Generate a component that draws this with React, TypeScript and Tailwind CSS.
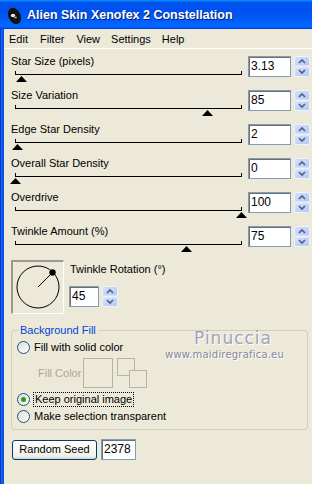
import React from "react";

const sliders = [
  { label: "Star Size (pixels)", value: "3.13", pos: 0.027 },
  { label: "Size Variation", value: "85", pos: 0.85 },
  { label: "Edge Star Density", value: "2", pos: 0.01 },
  { label: "Overall Star Density", value: "0", pos: 0 },
  { label: "Overdrive", value: "100", pos: 1 },
  { label: "Twinkle Amount (%)", value: "75", pos: 0.755 },
];

const FONT = "font-['Liberation_Sans',Arial,sans-serif]";

function Spinner() {
  return (
    <svg width="16" height="21" viewBox="0 0 16 21" className="shrink-0">
      <defs>
        <linearGradient id="spin" x1="0" y1="0" x2="1" y2="1">
          <stop offset="0" stopColor="#d6e2fb" />
          <stop offset="1" stopColor="#b2c7f3" />
        </linearGradient>
      </defs>
      <rect x="0.5" y="0.5" width="15" height="9.5" rx="1.5" fill="url(#spin)" stroke="#eef3fe" />
      <rect x="0.5" y="11" width="15" height="9.5" rx="1.5" fill="url(#spin)" stroke="#eef3fe" />
      <path d="M5 7 L8 4 L11 7" fill="none" stroke="#4d6185" strokeWidth="1.6" />
      <path d="M5 14 L8 17 L11 14" fill="none" stroke="#4d6185" strokeWidth="1.6" />
    </svg>
  );
}

function TextBox({ value, w }: { value: string; w: string }) {
  return (
    <div
      className={`${w} h-[21px] bg-white border border-[#7f9db9] shadow-[inset_1px_1px_0_#6f6f6f] pl-[2px] text-[12px] leading-[19px] text-black shrink-0`}
    >
      {value}
    </div>
  );
}

function Thumb({ pos }: { pos: number }) {
  return (
    <svg
      width="11"
      height="6"
      viewBox="0 0 11 6"
      className="absolute top-[8px]"
      style={{ left: 4 + pos * 226 - 5 }}
    >
      <polygon points="5.5,0 11,6 0,6" fill="#000" />
    </svg>
  );
}

function SliderRow({ label, value, pos }: { label: string; value: string; pos: number }) {
  return (
    <div className="flex h-[34px]">
      <div className="w-[237px] flex flex-col">
        <div className="h-[14px] leading-[14px] text-[11px] text-black">{label}</div>
        <div className="relative h-[20px]">
          <div className="ml-[4px] mt-[3px] w-[227px] h-[4px] border-x border-b border-black" />
          <Thumb pos={pos} />
        </div>
      </div>
      <div className="flex gap-[3px] pt-[2px]">
        <TextBox value={value} w="w-[43px]" />
        <Spinner />
      </div>
    </div>
  );
}

function Radio({ checked }: { checked?: boolean }) {
  return (
    <div className="w-[13px] h-[13px] rounded-full border border-[#1c5180] bg-[linear-gradient(135deg,#dcdcd7,#ffffff)] flex items-center justify-center shrink-0">
      {checked && <div className="w-[5px] h-[5px] rounded-full bg-[#21a121]" />}
    </div>
  );
}

export default function App() {
  return (
    <div className={`w-[312px] h-[484px] bg-[#ece9d8] flex flex-col overflow-hidden ${FONT}`}>
      {/* title bar */}
      <div className="h-[29px] shrink-0 flex items-center pl-[7px] pt-[2px] gap-[5px] bg-[linear-gradient(180deg,#0997ff,#0053ee_8%,#0050ee_40%,#0066ff_88%,#0066ff_93%,#005bff_95%,#003dd7_96%,#003dd7)]">
        <svg width="15" height="18" viewBox="0 0 15 18">
          <ellipse cx="7.5" cy="9" rx="6" ry="8.5" transform="rotate(-25 7.5 9)" fill="#111" />
          <ellipse cx="6" cy="8.5" rx="2.2" ry="1.7" fill="#e8e8e8" />
          <ellipse cx="8.5" cy="10.5" rx="1.4" ry="1" fill="#999" />
        </svg>
        <span className="text-white font-bold text-[12.5px] [text-shadow:1px_1px_0_#0a1e6e]">
          Alien Skin Xenofex 2 Constellation
        </span>
      </div>

      <div className="flex flex-1">
        <div className="w-[4px] shrink-0 bg-[linear-gradient(90deg,#0831d9_0_1px,#166aee_1px_2px,#0855dd_2px)]" />
        <div className="flex-1 flex flex-col">
          {/* menu */}
          <div className="h-[20px] pt-[2px] flex items-center text-[11px] text-black border-b border-white">
            <span className="pl-[5px] pr-[6px]">Edit</span>
            <span className="px-[6px]">Filter</span>
            <span className="px-[6px]">View</span>
            <span className="pl-[5px] pr-[6px]">Settings</span>
            <span className="pl-[5px] pr-[6px]">Help</span>
          </div>

          <div className="pl-[7px] pt-[5px] flex flex-col">
            {sliders.map((s) => (
              <SliderRow key={s.label} {...s} />
            ))}

            {/* rotation */}
            <div className="flex mt-[2px] gap-[5px]">
              <div className="w-[53px] h-[54px] border-t-2 border-l-2 border-[#9d9a8c] border-b border-r border-b-white border-r-white">
                <svg width="50" height="51" viewBox="0 0 50 51">
                  <circle cx="25" cy="25" r="21" fill="none" stroke="#000" strokeWidth="1" />
                  <line x1="25" y1="25" x2="39.8" y2="10.2" stroke="#000" strokeWidth="1" />
                  <circle cx="39.5" cy="10.5" r="3.2" fill="#000" />
                </svg>
              </div>
              <div className="flex flex-col pt-[2px]">
                <div className="h-[14px] leading-[14px] text-[11px] pl-[1px]">Twinkle Rotation (°)</div>
                <div className="flex gap-[3px] mt-[10px]">
                  <TextBox value="45" w="w-[30px]" />
                  <Spinner />
                </div>
              </div>
            </div>

            {/* background fill */}
            <div className="relative mt-[16px] w-[297px] h-[100px] border border-[#d0d0bf] rounded-[3px] pl-[5px] pt-[8px] text-[11px]">
              <div className="absolute -top-[8px] left-[6px] px-[2px] bg-[#ece9d8] text-[#0046d5] leading-[14px]">
                Background Fill
              </div>
              <div className="absolute left-[153px] top-[-3px] flex flex-col items-start font-['DejaVu_Sans',sans-serif] pointer-events-none">
                <span className="ml-[29px] text-[17px] leading-[20px] tracking-[1px] text-[#a2a2ba] [text-shadow:1px_1px_0_#ffffff]">
                  Pinuccia
                </span>
                <span className="mt-[1px] text-[10px] leading-[11px] tracking-[0.2px] text-[#8686a0] [text-shadow:1px_1px_0_#ffffff]">
                  www.maidiregrafica.eu
                </span>
              </div>

              <div className="flex items-center gap-[4px] h-[16px]">
                <Radio />
                <span>Fill with solid color</span>
              </div>
              <div className="flex items-center h-[30px] mt-[3px] pl-[21px]">
                <span className="text-[#aca899] w-[45px]">Fill Color</span>
                <div className="w-[30px] h-[30px] border border-[#b5b3a5]" />
                <div className="relative w-[30px] h-[30px] ml-[4px]">
                  <div className="absolute left-0 top-0 w-[18px] h-[18px] border border-[#b5b3a5]" />
                  <div className="absolute left-[12px] top-[12px] w-[18px] h-[18px] border border-[#b5b3a5] bg-[#ece9d8]" />
                </div>
              </div>
              <div className="flex items-center gap-[3px] h-[16px] mt-[3px]">
                <Radio checked />
                <span className="border border-dotted border-black px-[1px] leading-[13px]">Keep original image</span>
              </div>
              <div className="flex items-center gap-[4px] h-[16px] mt-[1px]">
                <Radio />
                <span>Make selection transparent</span>
              </div>
            </div>

            {/* random seed */}
            <div className="flex items-center gap-[4px] mt-[9px] pl-[1px]">
              <button className="w-[85px] h-[20px] rounded-[3px] border border-[#003c74] bg-[linear-gradient(180deg,#ffffff,#f0f0ea_85%,#d6d0c5)] text-[11px] text-black">
                Random Seed
              </button>
              <TextBox value="2378" w="w-[35px]" />
            </div>
          </div>
        </div>
      </div>
    </div>
  );
}
